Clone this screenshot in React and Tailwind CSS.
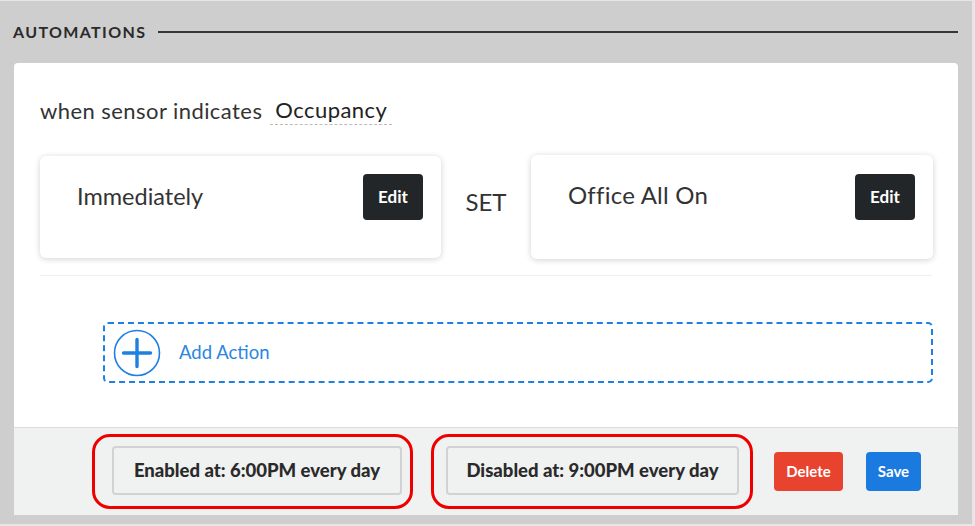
import React from "react";

function EditBtn() {
  return (
    <button className="w-[60px] h-[46px] rounded-[4px] bg-[#222629] text-white font-bold text-[17px] flex items-center justify-center">
      Edit
    </button>
  );
}

export default function App() {
  return (
    <div
      className="w-[975px] h-[526px] bg-[#cecece] flex flex-col pl-[14px] pr-[14px] pb-[9px] border-t border-r-[3px] border-b-2 border-[#e6e6e6]"
      style={{ fontFamily: "Lato, 'Open Sans', sans-serif" }}
    >
      <div className="flex items-center h-[20px] mt-[21px] gap-[12px] -ml-[1px]">
        <span className="text-[16px] font-bold tracking-[0.085em] text-[#2a2a2a] leading-none">AUTOMATIONS</span>
        <div className="flex-1 h-[2px] bg-[#333538]" />
      </div>

      <div className="mt-[21px] flex-1 bg-white rounded-t-[4px] overflow-hidden flex flex-col">
        <div className="flex-1 pl-[26px] pr-[25px] pt-[32px]">
          <div className="flex items-center h-[30px] text-[22px] tracking-[0.02em] text-[#333]">
            <span>when sensor indicates</span>
            <span className="ml-[8px] px-[5px] border-b border-dashed border-[#bbb] text-[#222] leading-[28px]">Occupancy</span>
          </div>

          <div className="mt-[31px] grid grid-cols-[401px_90px_1fr] items-start">
            <div className="h-[102px] rounded-[6px] bg-white shadow-[0_1px_6px_rgba(0,0,0,0.18)] pl-[37px] pr-[18px] pt-[18px] flex justify-between items-start">
              <span className="h-[46px] flex items-center text-[23.5px] text-[#333]">Immediately</span>
              <EditBtn />
            </div>
            <div className="h-[92px] flex items-center justify-center text-[24px] text-[#333]">SET</div>
            <div className="h-[104px] -mt-[1px] rounded-[6px] bg-white shadow-[0_1px_6px_rgba(0,0,0,0.18)] pl-[37px] pr-[18px] pt-[19px] flex justify-between items-start">
              <span className="h-[42px] flex items-center text-[24px] tracking-[0.01em] text-[#333]">Office All On</span>
              <EditBtn />
            </div>
          </div>

          <div className="mt-[16px] border-t border-[#eeeeee] mr-[1px]" />

          <div className="mt-[46px] ml-[63px] h-[61px] rounded-[5px] border-2 border-dashed border-[#1e80e2] flex items-center pl-[8px]">
            <svg width="48" height="48" viewBox="0 0 48 48" className="shrink-0">
              <circle cx="24" cy="24" r="22.5" fill="none" stroke="#1e80e2" strokeWidth="1.6" />
              <path d="M24 10.5V37.5M10.5 24H37.5" stroke="#1e80e2" strokeWidth="3.4" strokeLinecap="round" />
            </svg>
            <span className="ml-[18px] text-[18.5px] text-[#2a86e0]">Add Action</span>
          </div>
        </div>

        <div className="h-[88px] bg-[#f0f1f1] border-t border-[#dcdcdc] flex items-center pl-[78px]">
          <div className="rounded-[18px] border-[3px] border-[#ee0000] pl-[17px] pr-[8px] pt-[9px] pb-[11px]">
            <button className="w-[290px] h-[49px] rounded-[4px] border-2 border-[#d2d2d2] bg-[#f0f1f1] text-[18.5px] font-black text-[#2a2a2a]">
              Enabled at: 6:00PM every day
            </button>
          </div>
          <div className="ml-[18px] rounded-[18px] border-[3px] border-[#ee0000] pl-[12px] pr-[11px] pt-[9px] pb-[11px]">
            <button className="w-[293px] h-[49px] rounded-[4px] border-2 border-[#d2d2d2] bg-[#f0f1f1] text-[18.5px] font-black text-[#2a2a2a]">
              Disabled at: 9:00PM every day
            </button>
          </div>
          <button className="ml-[21px] w-[69px] h-[39px] rounded-[4px] bg-[#e8432e] text-white font-bold text-[15px]">Delete</button>
          <button className="ml-[23px] w-[55px] h-[39px] rounded-[4px] bg-[#1a7ae0] text-white font-bold text-[15px]">Save</button>
        </div>
      </div>
    </div>
  );
}
